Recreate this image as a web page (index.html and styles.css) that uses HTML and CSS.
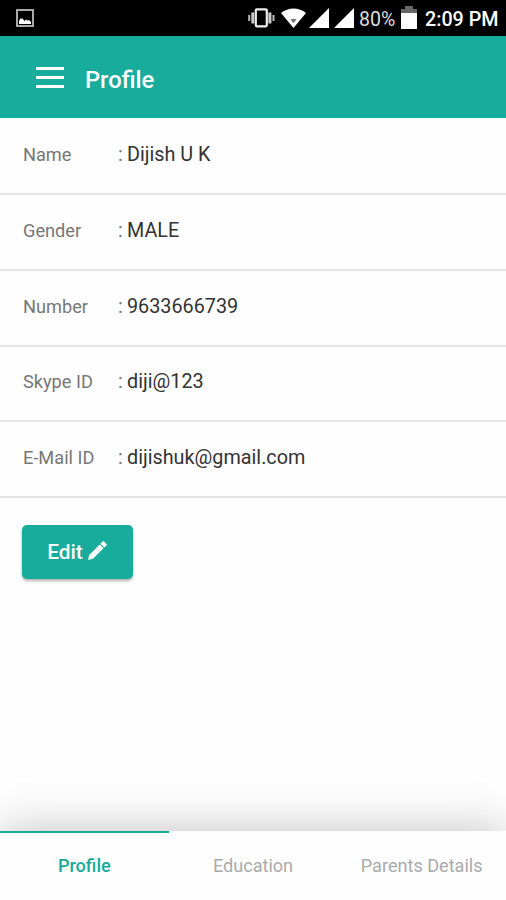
FILE: index.html
```html
<!DOCTYPE html>
<html>
<head>
<meta charset="UTF-8">
<title>Profile</title>

<link rel="stylesheet" href="styles.css">

</head>
<body>
	<!-- phone status bar -->
	<div class="statusbar">
		<svg class="icon-picture" width="18" height="18" viewBox="0 0 18 18">
			<rect x="1" y="1" width="16" height="16" fill="none" stroke="#bbb" stroke-width="1.8"/>
			<path d="M3 15V12L4.5 9.5H6.5L8.5 12L10 10.5L11.5 11.5L13 11L15 13V15Z" fill="#fff"/>
		</svg>
		<svg class="icon-vibrate" width="27" height="20" viewBox="0 0 27 20">
			<rect x="7.8" y="1.3" width="11" height="17" rx="1" fill="none" stroke="#eee" stroke-width="2.2"/>
			<path d="M4.8 4.5V15.5M21.9 4.5V15.5" stroke="#ccc" stroke-width="3"/>
			<path d="M1.2 7V13M25.5 7V13" stroke="#bbb" stroke-width="2"/>
		</svg>
		<svg class="icon-wifi" width="25" height="20" viewBox="0 0 25 20">
			<path d="M0 5C7 -1 18 -1 25 5L12.5 20Z" fill="#fff"/>
			<path d="M9.5 11.5Q12.5 10 15.5 11.5L12.5 15.3Z" fill="#777"/>
		</svg>
		<svg class="icon-signal" width="20" height="20" viewBox="0 0 20 20">
			<path d="M0 20L20 0V20Z" fill="#fff"/>
		</svg>
		<svg class="icon-signal second" width="20" height="20" viewBox="0 0 20 20">
			<path d="M0 20L20 0V20Z" fill="#fff"/>
		</svg>
		<span class="percent">80%</span>
		<svg class="icon-battery" width="16" height="23" viewBox="0 0 16 23">
			<path d="M0 7V3H4V0H12V3H16V7Z" fill="#666"/>
			<rect y="7" width="16" height="16" fill="#fff"/>
		</svg>
		<span class="clock">2:09 PM</span>
	</div>

	<div class="header">
		<div class="menu">
			<span></span>
			<span></span>
			<span></span>
		</div>
		<h1>Profile</h1>
	</div>

	<div class="content">
		<div class="row">
			<span class="label">Name</span>
			<span class="colon">:</span>
			<span class="value">Dijish U K</span>
		</div>
		<div class="row">
			<span class="label">Gender</span>
			<span class="colon">:</span>
			<span class="value">MALE</span>
		</div>
		<div class="row">
			<span class="label">Number</span>
			<span class="colon">:</span>
			<span class="value">9633666739</span>
		</div>
		<div class="row">
			<span class="label">Skype ID</span>
			<span class="colon">:</span>
			<span class="value">diji@123</span>
		</div>
		<div class="row">
			<span class="label">E-Mail ID</span>
			<span class="colon">:</span>
			<span class="value">dijishuk@gmail.com</span>
		</div>

		<button class="edit">
			Edit
			<svg width="19" height="19" viewBox="0 0 19 19">
				<path d="M0 19L1.2 14L11.7 3.5L15.5 7.3L5 17.8Z" fill="#fff"/>
				<path d="M12.4 2.8L14.6 0.6Q15.4 -0.1 16.2 0.6L18.4 2.8Q19.1 3.6 18.4 4.4L16.2 6.6Z" fill="#fff"/>
			</svg>
		</button>
	</div>

	<!-- tabs at the bottom -->
	<div class="tabs">
		<div class="tab active">Profile</div>
		<div class="tab">Education</div>
		<div class="tab">Parents Details</div>
	</div>
</body>
</html>
```
FILE: styles.css
```css
body {
	margin: 0;
	height: 900px;
	display: flex;
	flex-direction: column;
	overflow: hidden;
	background-color: #fefefe;
	font-family: Roboto, sans-serif;
}

.statusbar {
	display: flex;
	align-items: center;
	height: 36px;
	box-sizing: border-box;
	padding: 0 8px 0 16px;
	background-color: #000;
	color: #fff;
}

.statusbar svg {
	flex: none;
}

.icon-vibrate {
	margin-left: auto; /* pushes the rest to the right */
}

.icon-wifi {
	margin-left: 6px;
}

.icon-signal {
	margin-left: 3px;
}

.icon-signal.second {
	margin-left: 5px;
}

.percent {
	width: 37px;
	margin-left: 5px;
	padding-top: 2px;
	font-size: 19.5px;
	color: #ddd;
	white-space: nowrap;
}

.icon-battery {
	margin: 0 0 2px 5px;
}

.clock {
	width: 73px;
	margin-left: 8px;
	padding-top: 2px;
	font-size: 19.7px;
	font-weight: 500;
	white-space: nowrap;
}

.header {
	display: flex;
	align-items: center;
	height: 82px;
	padding-left: 36px;
	background-color: #17ac9c;
	color: #fff;
}

.header h1 {
	margin: 5px 0 0 21px;
	font-size: 23.7px;
	font-weight: 500;
}

/* three lines */
.menu {
	display: flex;
	flex-direction: column;
	gap: 6px;
	width: 28px;
	margin-top: 1px;
}

.menu span {
	height: 3px;
	background-color: #fff;
}

.content {
	flex: 1;
}

.row {
	display: flex;
	align-items: center;
	height: 75.8px;
	box-sizing: border-box;
	padding: 0 0 3px 23px;
	border-bottom: 2px solid #e6e6e6;
	font-size: 19.8px;
	color: #333;
}

.row:first-child {
	height: 77px;
}

.label {
	width: 95px;
	font-size: 18.2px;
	color: #777;
}

.colon {
	width: 9px;
	color: #777;
}

.edit {
	display: flex;
	align-items: center;
	justify-content: center;
	gap: 5px;
	width: 111px;
	height: 54px;
	margin: 27px 0 0 22px;
	padding: 0 1px 0 0;
	border: none;
	border-radius: 5px;
	background-color: #17ac9c;
	box-shadow: 0 2px 3px rgba(0, 0, 0, 0.3);
	color: #fff;
	font-family: Roboto, sans-serif;
	font-size: 20.8px;
	font-weight: 500;
}

.edit svg {
	margin-bottom: 3px;
}

.tabs {
	display: flex;
	height: 69px;
	background-color: #fefefe;
	box-shadow: 0 0 48px rgba(0, 0, 0, 0.25);
}

.tab {
	flex: 1;
	box-sizing: border-box;
	padding-top: 22px;
	border-top: 2px solid transparent;
	text-align: center;
	font-size: 18.1px;
	line-height: 21px;
	color: #aaa;
}

.tab.active {
	border-top-color: #17ac9c;
	color: #17ac9c;
	font-weight: 500;
}
```
